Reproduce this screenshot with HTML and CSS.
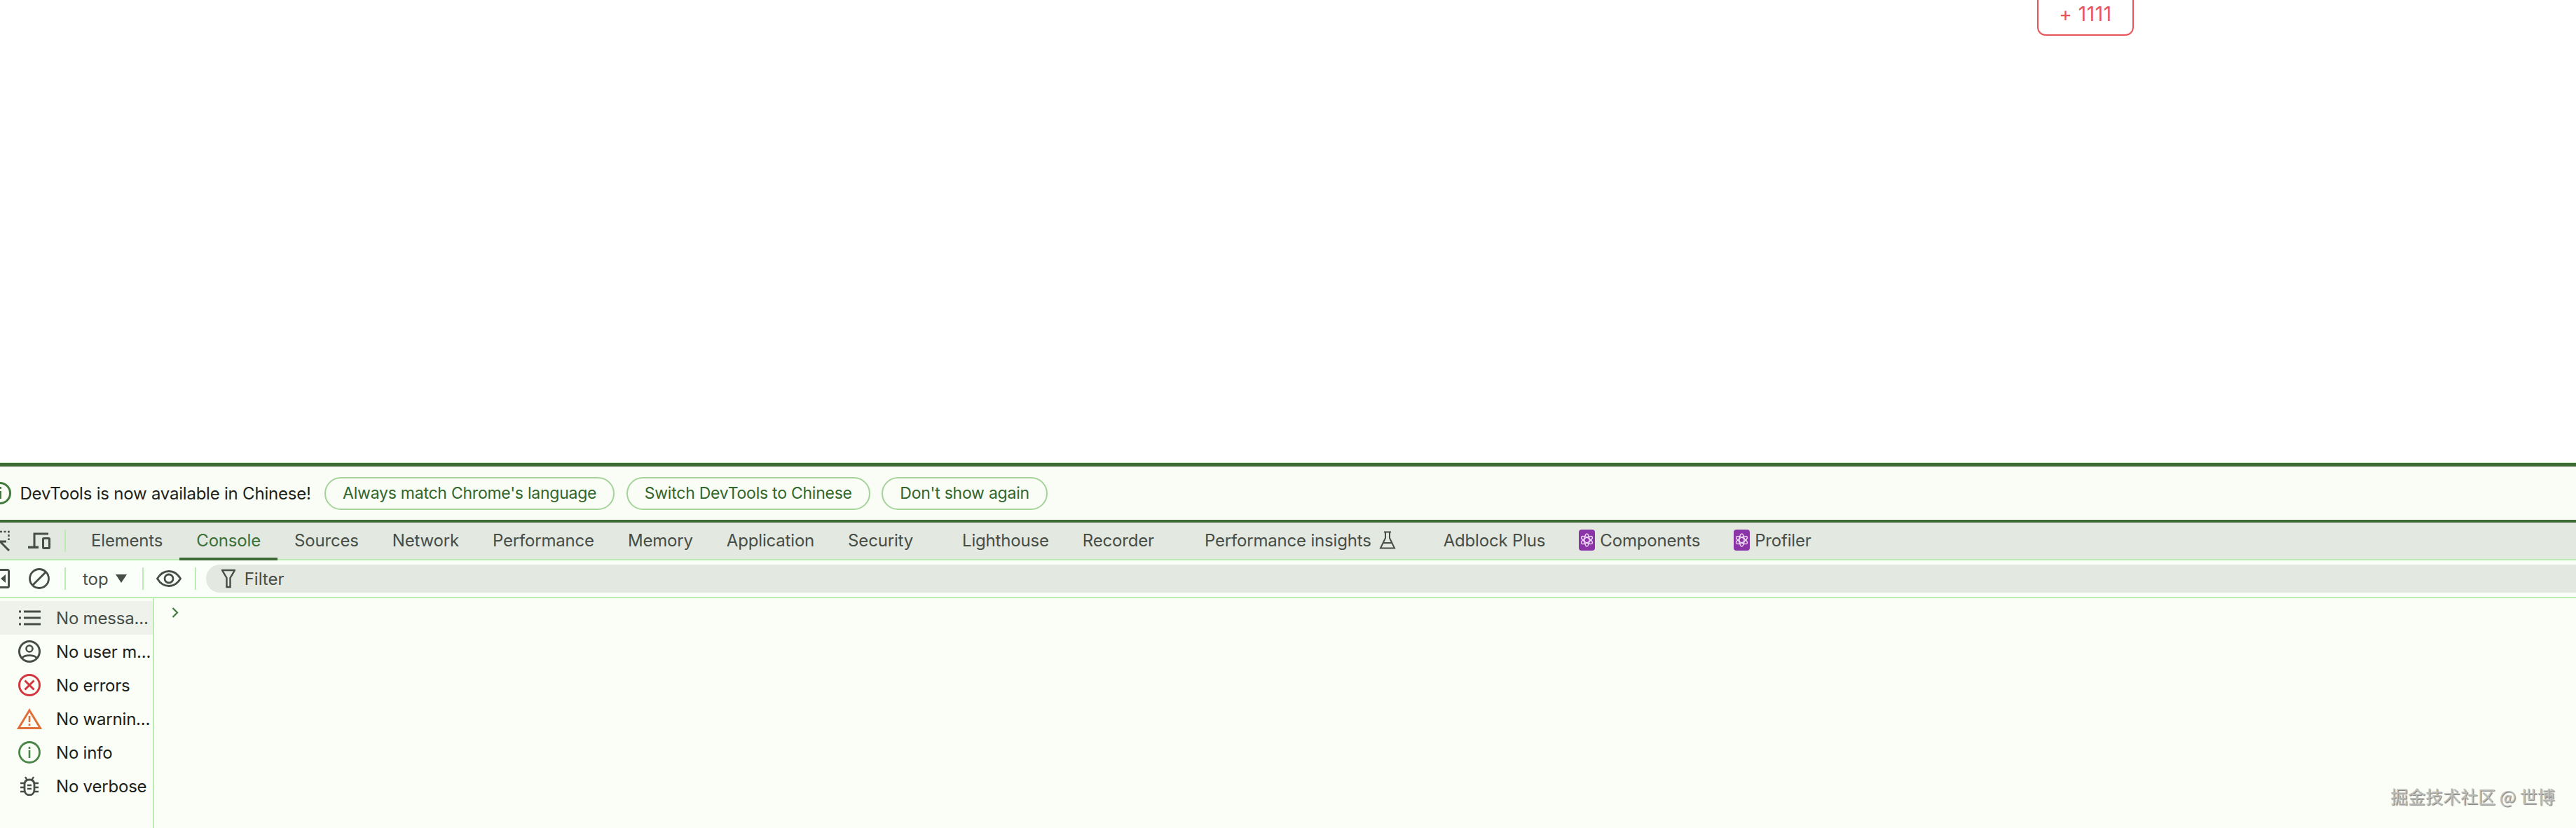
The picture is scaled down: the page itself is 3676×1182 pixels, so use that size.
FILE: index.html
```html
<!DOCTYPE html>
<html lang="en">
<head>
<meta charset="utf-8">
<title>DevTools</title>
<link rel="stylesheet" href="styles.css">
</head>
<body>
<main class="page">
  <button class="add-btn">+ 1111</button>
</main>
<section class="devtools">
  <div class="infobar">
    <svg class="info-ico" width="18" height="34" viewBox="0 0 18 34"><circle cx="0" cy="17" r="14.5" fill="none" stroke="#3f7a3c" stroke-width="3"/><rect x="-1" y="14" width="3" height="11" fill="#3f7a3c"/><rect x="-1" y="8" width="3" height="3" fill="#3f7a3c"/></svg>
    <span class="info-text">DevTools is now available in Chinese!</span>
    <button class="pill">Always match Chrome's language</button>
    <button class="pill">Switch DevTools to Chinese</button>
    <button class="pill">Don't show again</button>
  </div>
  <nav class="tabs">
    <svg class="ic-inspect" width="14" height="30" viewBox="0 0 14 30"><path d="M0 2H12.5V14" fill="none" stroke="#474d47" stroke-width="2.5" stroke-dasharray="3 2.5"/><path d="M0 16H9M0 16L13 29" fill="none" stroke="#474d47" stroke-width="3"/></svg>
    <svg class="ic-device" width="32" height="24" viewBox="0 0 32 24"><path d="M29 2H9V21" fill="none" stroke="#474d47" stroke-width="3"/><rect x="0" y="19.5" width="15" height="3.5" fill="#474d47"/><rect x="21.5" y="8.5" width="9" height="14" rx="1" fill="none" stroke="#474d47" stroke-width="3"/></svg>
    <i class="sep"></i>
    <div class="tablist">
      <a class="tab">Elements</a>
      <a class="tab active">Console</a>
      <a class="tab">Sources</a>
      <a class="tab">Network</a>
      <a class="tab">Performance</a>
      <a class="tab">Memory</a>
      <a class="tab">Application</a>
      <a class="tab gap-sec">Security</a>
      <a class="tab">Lighthouse</a>
      <a class="tab gap-rec">Recorder</a>
      <a class="tab gap-ins">Performance insights
        <svg class="flask" width="24" height="26" viewBox="0 0 24 26"><path d="M7 1.500H17M9 1.500V10L2 24.500H22L15 10V1.500M6 17H18" fill="none" stroke="#474d47" stroke-width="2"/></svg>
      </a>
      <a class="tab">Adblock Plus</a>
      <a class="tab react">
        <svg width="23" height="30" viewBox="0 0 23 30"><rect width="23" height="30" rx="4" fill="#8a34a8"/><g fill="none" stroke="#f0d8f6" stroke-width="1.400"><ellipse cx="11.500" cy="15" rx="3.500" ry="9"/><ellipse cx="11.500" cy="15" rx="3.500" ry="9" transform="rotate(60 11.500 15)"/><ellipse cx="11.500" cy="15" rx="3.500" ry="9" transform="rotate(-60 11.500 15)"/></g></svg>
        Components</a>
      <a class="tab react">
        <svg width="23" height="30" viewBox="0 0 23 30"><rect width="23" height="30" rx="4" fill="#8a34a8"/><g fill="none" stroke="#f0d8f6" stroke-width="1.400"><ellipse cx="11.500" cy="15" rx="3.500" ry="9"/><ellipse cx="11.500" cy="15" rx="3.500" ry="9" transform="rotate(60 11.500 15)"/><ellipse cx="11.500" cy="15" rx="3.500" ry="9" transform="rotate(-60 11.500 15)"/></g></svg>
        Profiler</a>
    </div>
  </nav>
  <div class="toolbar">
    <svg class="ic-side" width="14" height="28" viewBox="0 0 14 28"><path d="M0 1.500H10.500Q12.500 1.500 12.500 3.500V24.500Q12.500 26.500 10.500 26.500H0" fill="none" stroke="#474d47" stroke-width="3"/><path d="M8 8V20L1 14Z" fill="#474d47"/></svg>
    <svg class="ic-clear" width="30" height="30" viewBox="0 0 30 30"><circle cx="15" cy="15" r="13.500" fill="none" stroke="#474d47" stroke-width="2.800"/><path d="M24.500 5.500L5.500 24.500" stroke="#474d47" stroke-width="2.800"/></svg>
    <i class="sep s-a"></i>
    <span class="ctx">top</span>
    <svg class="caret" width="16" height="12" viewBox="0 0 16 12"><path d="M0 0H16L8 12Z" fill="#474d47"/></svg>
    <i class="sep s-b"></i>
    <svg class="ic-eye" width="36" height="24" viewBox="0 0 36 24"><path d="M1.500 12C6 4.500 11.500 1.500 18 1.500S30 4.500 34.500 12C30 19.500 24.500 22.500 18 22.500S6 19.500 1.500 12Z" fill="none" stroke="#474d47" stroke-width="2.800"/><circle cx="18" cy="12" r="6" fill="none" stroke="#474d47" stroke-width="2.800"/></svg>
    <i class="sep s-c"></i>
    <div class="filter">
      <svg width="20" height="28" viewBox="0 0 20 28"><path d="M1 2H19L12.500 13V26H7.500V13Z" fill="none" stroke="#474d47" stroke-width="2.400"/></svg>
      <span>Filter</span>
    </div>
  </div>
  <div class="console">
    <aside class="sidebar">
      <div class="row selected">
        <svg width="32" height="24" viewBox="0 0 32 24"><path d="M8 3H32M8 12H32M8 21H32" stroke="#474d47" stroke-width="3"/><path d="M1 3H4M1 12H4M1 21H4" stroke="#474d47" stroke-width="3"/></svg>
        <span>No messa...</span>
      </div>
      <div class="row">
        <svg width="32" height="32" viewBox="0 0 32 32"><circle cx="16" cy="16" r="14.500" fill="none" stroke="#474d47" stroke-width="3"/><circle cx="16" cy="12" r="4.500" fill="none" stroke="#474d47" stroke-width="2.600"/><path d="M6 25C9 20.500 23 20.500 26 25" fill="none" stroke="#474d47" stroke-width="2.600"/></svg>
        <span>No user m...</span>
      </div>
      <div class="row">
        <svg width="32" height="32" viewBox="0 0 32 32"><circle cx="16" cy="16" r="14.500" fill="none" stroke="#d2363f" stroke-width="3"/><path d="M9.500 9.500L22.500 22.500M22.500 9.500L9.500 22.500" stroke="#d2363f" stroke-width="3"/></svg>
        <span>No errors</span>
      </div>
      <div class="row">
        <svg width="36" height="30" viewBox="0 0 36 30"><path d="M18 3L33.500 28.500H2.500Z" fill="none" stroke="#e0703a" stroke-width="3"/><path d="M18 11V20M18 22V25" stroke="#e0703a" stroke-width="2.600"/></svg>
        <span>No warnin...</span>
      </div>
      <div class="row">
        <svg width="32" height="32" viewBox="0 0 32 32"><circle cx="16" cy="16" r="14.500" fill="none" stroke="#4a8548" stroke-width="2.800"/><path d="M16 13V24M16 8V11" stroke="#4a8548" stroke-width="2.600"/></svg>
        <span>No info</span>
      </div>
      <div class="row">
        <svg width="26" height="28" viewBox="0 0 26 28"><path d="M7 1L10 6M19 1L16 6" stroke="#474d47" stroke-width="2.400"/><path d="M13 5C8 5 6 8 6 12V19C6 24 9 27 13 27S20 24 20 19V12C20 8 18 5 13 5Z" fill="none" stroke="#474d47" stroke-width="2.800"/><path d="M0 10H6M20 10H26M0 16H6M20 16H26M0 22H6M20 22H26M10 13H16M10 18H16" stroke="#474d47" stroke-width="2.400"/></svg>
        <span>No verbose</span>
      </div>
    </aside>
    <div class="prompt">
      <svg width="10" height="15" viewBox="0 0 10 15"><path d="M1.500 1L8 7.500L1.500 14" fill="none" stroke="#3f7a3c" stroke-width="2.200"/></svg>
    </div>
  </div>
</section>
<div class="watermark">掘金技术社区 @ 世博</div>
</body>
</html>
```
FILE: styles.css
```css
* { box-sizing: border-box; }
html, body { margin: 0; height: 100%; }
body {
  width: 3676px;
  height: 1182px;
  overflow: hidden;
  background: #fff;
  font-family: Inter, "Noto Sans CJK SC", sans-serif;
  display: flex;
  flex-direction: column;
  position: relative;
}
.page { height: 660px; flex: none; padding-left: 2907px; }
.add-btn {
  display: block;
  width: 138px;
  height: 62px;
  margin-top: -11px;
  padding: 0;
  border: 2.500px solid #e9545a;
  border-radius: 12px;
  background: #fff;
  color: #e9545a;
  font: 400 28px Inter, sans-serif;
  letter-spacing: 0.6px;
}
.devtools { flex: 1; display: flex; flex-direction: column; min-height: 0; background: #fafef6; }
.infobar {
  height: 86px;
  flex: none;
  background: #f9fdf5;
  border-top: 1px solid #b9eeb0;
  border-bottom: 4px solid #3f6a38;
  display: flex;
  align-items: center;
  position: relative;
  padding-top: 5px;
  gap: 16.500px;
}
.infobar::before {
  content: "";
  position: absolute;
  left: 0; right: 0; top: 0;
  height: 5px;
  background: #3f6a38;
}
.info-ico { flex: none; margin-right: -6px; }
.info-text { font-size: 24px; letter-spacing: -0.22px; color: #1c1f1c; margin-right: 3px; }
.pill {
  height: 47px;
  padding: 0 24px;
  border: 2px solid #a5d39a;
  border-radius: 24px;
  background: transparent;
  color: #33662d;
  font: 400 23px Inter, sans-serif;
  letter-spacing: -0.24px;
  white-space: nowrap;
}
.tabs {
  height: 54px;
  flex: none;
  background: #e3e8e0;
  border-bottom: 2px solid #b9eeb0;
  display: flex;
  align-items: center;
}
.sep { display: block; width: 2px; height: 32px; background: #b9eeb0; flex: none; }
.ic-inspect { flex: none; margin-right: 26px; }
.ic-device { flex: none; margin-right: 20px; }
.tablist { display: flex; height: 52px; margin-left: 12px; }
.tab {
  display: flex;
  align-items: center;
  gap: 11px;
  height: 54px;
  padding: 0 24px 2px;
  font-size: 24px;
  letter-spacing: -0.18px;
  color: #474d47;
  border-bottom: 2px solid transparent;
  white-space: nowrap;
}
.tab.active { color: #3c7036; border-bottom: 4px solid #3f6a38; padding-bottom: 0; }
.tab.react { gap: 7px; }
.gap-sec { margin-right: 22px; }
.gap-rec { margin-right: 24px; }
.gap-ins { margin-right: 20px; }
.toolbar {
  height: 54px;
  flex: none;
  background: #fbfff9;
  border-bottom: 2px solid #b9eeb0;
  display: flex;
  align-items: center;
}
.ic-side { flex: none; margin-right: 27px; }
.ic-clear { flex: none; margin-right: 21px; }
.ctx { font-size: 24px; color: #474d47; margin-left: 24px; }
.caret { flex: none; margin-left: 10px; }
.s-b { margin-left: 22px; }
.ic-eye { flex: none; margin-left: 18px; margin-right: 19px; }
.filter {
  flex: 1;
  height: 40px;
  margin-left: 14px;
  padding-left: 22px;
  background: #e3e8e0;
  border-radius: 20px 0 0 20px;
  display: flex;
  align-items: center;
  gap: 13px;
  font-size: 24px;
  color: #474d47;
}
.console { flex: 1; display: flex; min-height: 0; }
.sidebar {
  width: 220px;
  flex: none;
  border-right: 2px solid #b9eeb0;
  padding-top: 4px;
}
.row {
  height: 48px;
  display: flex;
  align-items: center;
  position: relative;
  padding-left: 80px;
  font-size: 24px;
  letter-spacing: -0.2px;
  color: #1c1f1c;
  white-space: nowrap;
}
.row svg { position: absolute; left: 42px; top: 50%; transform: translate(-50%, -50%); }
.row.selected { background: #eff2eb; color: #474d47; }
.prompt { padding: 13px 0 0 25px; }
.prompt svg { display: block; }
.watermark {
  position: absolute;
  right: 30px;
  bottom: 30px;
  font-family: "Noto Sans CJK SC", sans-serif;
  font-size: 25px;
  line-height: 32px;
  color: #bcbebb;
  text-shadow: 1px 1px 1px #777;
  white-space: nowrap;
}
```
